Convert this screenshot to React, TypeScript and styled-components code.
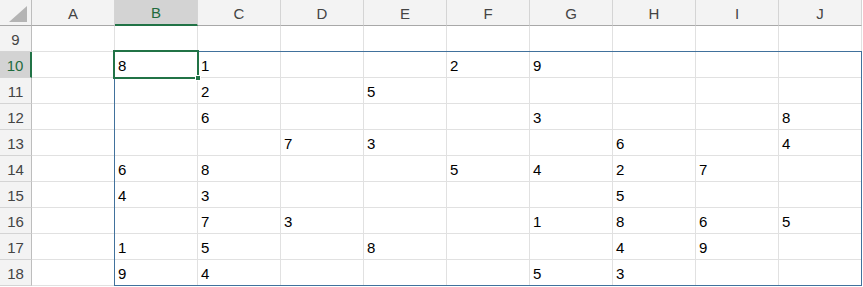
import React from "react";
import styled, { createGlobalStyle, css } from "styled-components";

const Global = createGlobalStyle`
  html, body { margin: 0; padding: 0; background: #ffffff; }
  * { box-sizing: border-box; }
`;

const COLS = ["A", "B", "C", "D", "E", "F", "G", "H", "I", "J"];
const ROWS = [9, 10, 11, 12, 13, 14, 15, 16, 17, 18];

const DATA: Record<number, Record<string, number>> = {
  10: { B: 8, C: 1, F: 2, G: 9 },
  11: { C: 2, E: 5 },
  12: { C: 6, G: 3, J: 8 },
  13: { D: 7, E: 3, H: 6, J: 4 },
  14: { B: 6, C: 8, F: 5, G: 4, H: 2, I: 7 },
  15: { B: 4, C: 3, H: 5 },
  16: { C: 7, D: 3, G: 1, H: 8, I: 6, J: 5 },
  17: { B: 1, C: 5, E: 8, H: 4, I: 9 },
  18: { B: 9, C: 4, G: 5, H: 3 },
};

const gridTemplate = css`
  display: grid;
  grid-template-columns: 32px repeat(10, 83px);
  grid-template-rows: repeat(11, 26px);
`;

/* Two layers stacked in one grid cell: the sheet, and the selection on top */
const Stack = styled.div`
  display: grid;
  width: 863px;
  height: 287px;
  overflow: hidden;
  font-family: "Liberation Sans", Arial, sans-serif;
  & > * {
    grid-area: 1 / 1;
  }
`;

const Sheet = styled.div`
  ${gridTemplate}
`;

const SelectionLayer = styled.div`
  ${gridTemplate}
  pointer-events: none;
`;

const Corner = styled.div`
  background: #f3f3f3;
  border-right: 1px solid #bdbdbd;
  border-bottom: 1px solid #a8a8a8;
  display: flex;
  align-items: flex-end;
  justify-content: flex-end;
  padding: 0 4px 3px 0;
`;

const ColHeader = styled.div<{ $active?: boolean }>`
  background: #f3f3f3;
  border-right: 1px solid #d4d4d4;
  border-bottom: 1px solid #a8a8a8;
  color: #444444;
  font-size: 15px;
  display: flex;
  align-items: center;
  justify-content: center;
  padding-top: 1px;
  ${(p) =>
    p.$active &&
    css`
      background: #d3d3d3;
      color: #1f6b3e;
      border-bottom: 2px solid #217346;
    `}
`;

const RowHeader = styled.div<{ $active?: boolean }>`
  background: #f3f3f3;
  border-right: 1px solid #bdbdbd;
  border-bottom: 1px solid #d4d4d4;
  color: #444444;
  font-size: 15px;
  display: flex;
  align-items: center;
  justify-content: center;
  padding-top: 1px;
  ${(p) =>
    p.$active &&
    css`
      background: #d3d3d3;
      color: #1f6b3e;
      border-right: 2px solid #217346;
    `}
`;

const Cell = styled.div`
  border-right: 1px solid #e1e1e1;
  border-bottom: 1px solid #e1e1e1;
  color: #000000;
  font-size: 15px;
  display: flex;
  align-items: center;
  padding: 2px 0 0 3px;
  background: #ffffff;
`;

/* Selection range B10:J18, laid on the grid by its lines */
const RangeOutline = styled.div`
  grid-column: 3 / 12;
  grid-row: 3 / 12;
  margin: -1px 0 0 -1px;
  border: 1px solid #41719c;
`;

/* Active cell B10 */
const ActiveCell = styled.div`
  grid-column: 3 / 4;
  grid-row: 3 / 4;
  margin: -2px -1px -1px -2px;
  border: 2px solid #217346;
  position: relative;
`;

const FillHandle = styled.div`
  position: absolute;
  right: -4px;
  bottom: -4px;
  width: 6px;
  height: 6px;
  background: #217346;
  border: 1px solid #ffffff;
`;

export default function App() {
  return (
    <>
      <Global />
      <Stack>
        <Sheet>
          <Corner>
            <svg width="18" height="16" viewBox="0 0 18 16">
              <polygon points="18,0 18,16 0,16" fill="#b4b4b4" />
            </svg>
          </Corner>
          {COLS.map((c) => (
            <ColHeader key={c} $active={c === "B"}>
              {c}
            </ColHeader>
          ))}
          {ROWS.map((r) => (
            <React.Fragment key={r}>
              <RowHeader $active={r === 10}>{r}</RowHeader>
              {COLS.map((c) => (
                <Cell key={c}>{DATA[r]?.[c] ?? ""}</Cell>
              ))}
            </React.Fragment>
          ))}
        </Sheet>
        <SelectionLayer>
          <RangeOutline />
          <ActiveCell>
            <FillHandle />
          </ActiveCell>
        </SelectionLayer>
      </Stack>
    </>
  );
}
